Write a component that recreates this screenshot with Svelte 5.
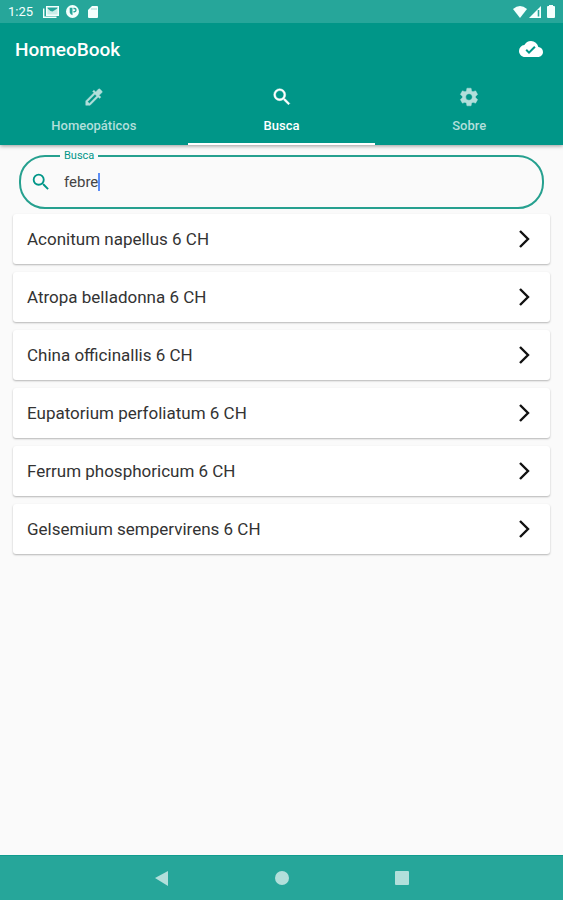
<script>
  let query = $state('febre');
  let active = $state('Busca');

  const tabs = [
    {
      name: 'Homeopáticos',
      path: 'M20.71 5.63l-2.34-2.34a1 1 0 0 0-1.41 0l-3.12 3.12-1.93-1.91-1.41 1.41 1.42 1.42L3 16.25V21h4.75l8.92-8.92 1.42 1.42 1.41-1.41-1.92-1.92 3.12-3.12c.4-.4.4-1.03.01-1.42zM6.92 19L5 17.08l8.06-8.06 1.92 1.92L6.92 19z'
    },
    {
      name: 'Busca',
      path: 'M15.5 14h-.79l-.28-.27A6.47 6.47 0 0 0 16 9.5 6.5 6.5 0 1 0 9.5 16c1.61 0 3.09-.59 4.23-1.57l.27.28v.79l5 4.99L20.49 19l-4.99-5zm-6 0C7.01 14 5 11.99 5 9.5S7.01 5 9.5 5 14 7.01 14 9.5 11.99 14 9.5 14z'
    },
    {
      name: 'Sobre',
      path: 'M19.14 12.94c.04-.3.06-.61.06-.94 0-.32-.02-.64-.07-.94l2.03-1.58a.49.49 0 0 0 .12-.61l-1.92-3.32a.49.49 0 0 0-.59-.22l-2.39.96c-.5-.38-1.03-.7-1.62-.94l-.36-2.54a.48.48 0 0 0-.48-.41h-3.84a.47.47 0 0 0-.47.41l-.36 2.54c-.59.24-1.13.57-1.62.94l-2.39-.96a.48.48 0 0 0-.59.22L2.74 8.87a.47.47 0 0 0 .12.61l2.03 1.58c-.05.3-.09.63-.09.94s.02.64.07.94l-2.03 1.58a.49.49 0 0 0-.12.61l1.92 3.32c.12.22.37.29.59.22l2.39-.96c.5.38 1.03.7 1.62.94l.36 2.54c.05.24.24.41.48.41h3.84c.24 0 .44-.17.47-.41l.36-2.54c.59-.24 1.13-.56 1.62-.94l2.39.96c.22.08.47 0 .59-.22l1.92-3.32a.47.47 0 0 0-.12-.61l-2.01-1.58zM12 15.6A3.61 3.61 0 0 1 8.4 12c0-1.98 1.62-3.6 3.6-3.6s3.6 1.62 3.6 3.6-1.62 3.6-3.6 3.6z'
    }
  ];

  const remedies = [
    'Aconitum napellus 6 CH',
    'Atropa belladonna 6 CH',
    'China officinallis 6 CH',
    'Eupatorium perfoliatum 6 CH',
    'Ferrum phosphoricum 6 CH',
    'Gelsemium sempervirens 6 CH'
  ];
</script>

<div class="screen">
  <header>
    <div class="status">
      <span class="time">1:25</span>
      <div class="notices">
        <svg width="16" height="12" viewBox="0 0 16 12" aria-hidden="true">
          <path d="M3.700.700h11.600v8.600H3.700z" fill="none" stroke="currentColor" stroke-width="1.400" />
          <path d="M.7 2.500v8.800h12.800" fill="none" stroke="currentColor" stroke-width="1.400" />
          <path d="M4 9V2l3.500 3 2 .5L12 4l3-2v7z" fill="currentColor" opacity=".8" />
        </svg>
        <svg width="13" height="13" viewBox="0 0 14 14" aria-hidden="true">
          <path d="M7 0a7 7 0 1 0 0 14A7 7 0 0 0 7 0zM4 3h3v8a4 4 0 0 1-3-3zM8 3h1a2.500 2.500 0 0 1 0 5H8V6.500h1a1 1 0 0 0 0-2H8z" fill="currentColor" fill-rule="evenodd" />
        </svg>
        <svg width="10" height="12" viewBox="0 0 10 12" aria-hidden="true">
          <path d="M4 0h5a1 1 0 0 1 1 1v10a1 1 0 0 1-1 1H1a1 1 0 0 1-1-1V4z" fill="currentColor" />
          <path d="M4 2v2M6 2v2M8 2v2" stroke="#26a69a" stroke-width=".8" opacity=".5" />
        </svg>
      </div>
      <div class="signals">
        <svg width="14" height="12" viewBox="0 0 14 12" aria-hidden="true">
          <path d="M0 3Q7-3 14 3L7 12z" fill="currentColor" />
        </svg>
        <svg width="12" height="12" viewBox="0 0 12 12" aria-hidden="true">
          <path d="M12 0v12H0z" fill="currentColor" />
          <path d="M9.500 4v6.500" stroke="#26a69a" stroke-width="1.600" />
        </svg>
        <svg class="battery" width="8" height="13" viewBox="0 0 8 13" aria-hidden="true">
          <path d="M2 0h4v1h1a1 1 0 0 1 1 1v10a1 1 0 0 1-1 1H1a1 1 0 0 1-1-1V2a1 1 0 0 1 1-1h1z" fill="currentColor" />
        </svg>
      </div>
    </div>

    <div class="bar">
      <h1>HomeoBook</h1>
      <button class="sync" aria-label="Sincronizado">
        <svg width="24" height="24" viewBox="0 0 24 24" aria-hidden="true">
          <path fill="currentColor" d="M19.350 10.040A7.490 7.490 0 0 0 12 4C9.110 4 6.600 5.640 5.350 8.040A5.994 5.994 0 0 0 0 14c0 3.310 2.690 6 6 6h13c2.760 0 5-2.240 5-5 0-2.640-2.050-4.780-4.650-4.960zM10 17l-3.500-3.500 1.410-1.410L10 14.170l5.180-5.180 1.410 1.410L10 17z" />
        </svg>
      </button>
    </div>

    <nav class="tabs">
      {#each tabs as tab}
        <button class="tab" class:active={active === tab.name} onclick={() => (active = tab.name)}>
          <svg width="22" height="22" viewBox="0 0 24 24" aria-hidden="true"><path d={tab.path} fill="currentColor" stroke="currentColor" stroke-width=".5" /></svg>
          <span>{tab.name}</span>
        </button>
      {/each}
    </nav>
  </header>

  <main>
    <fieldset class="search">
      <legend><label for="query">Busca</label></legend>
      <svg width="22" height="22" viewBox="0 0 24 24" aria-hidden="true"><path d={tabs[1].path} fill="currentColor" /></svg>
      <input id="query" type="text" bind:value={query} autocomplete="off" spellcheck="false" />
      <span class="caret"></span>
    </fieldset>

    <ul>
      {#each remedies as remedy}
        <li>
          <a href="#remedy">
            <span>{remedy}</span>
            <svg width="12" height="20" viewBox="0 0 12 20" aria-hidden="true">
              <path d="M2 2l8 8-8 8" fill="none" stroke="currentColor" stroke-width="2.400" />
            </svg>
          </a>
        </li>
      {/each}
    </ul>
  </main>

  <footer>
    <button aria-label="Voltar"><svg width="16" height="16" viewBox="0 0 16 16"><path d="M1 8L14 1v15z" fill="currentColor" /></svg></button>
    <button aria-label="Início"><svg width="16" height="16" viewBox="0 0 16 16"><circle cx="8" cy="8" r="7" fill="currentColor" /></svg></button>
    <button aria-label="Recentes"><svg width="16" height="16" viewBox="0 0 16 16"><rect x="1" y="1" width="14" height="14" rx="1" fill="currentColor" /></svg></button>
  </footer>
</div>

<style>
  .screen {
    display: flex;
    flex-direction: column;
    min-height: 100vh;
    background: #fafafa;
    color: #333;
    font-family: Roboto, 'Liberation Sans', sans-serif;
  }
  svg { display: block; flex: none; }
  button {
    margin: 0;
    padding: 0;
    border: 0;
    background: none;
    color: inherit;
    font: inherit;
    cursor: pointer;
  }
  header {
    background: #009688;
    color: #fff;
    box-shadow: 0 1px 4px rgba(0, 0, 0, 0.4);
  }
  .status {
    display: flex;
    align-items: center;
    gap: 10px;
    height: 23px;
    padding: 0 8px;
    background: #26a69a;
    color: #f4fffd;
  }
  .time { font-size: 13px; }
  .notices {
    display: flex;
    align-items: center;
    gap: 7px;
  }
  .notices svg:last-child { margin-left: 2px; }
  .signals {
    display: flex;
    align-items: center;
    gap: 2px;
    margin-left: auto;
  }
  .battery { margin-left: 4px; }
  .bar {
    display: flex;
    align-items: center;
    justify-content: space-between;
    height: 52px;
    padding: 0 20px 0 15px;
  }
  h1 {
    margin: 0;
    font-size: 19px;
    font-weight: 500;
  }
  .tabs { display: flex; }
  .tab {
    display: flex;
    flex: 1;
    flex-direction: column;
    align-items: center;
    gap: 10px;
    height: 70px;
    padding-top: 11px;
    box-sizing: border-box;
    border-bottom: 2px solid transparent;
    color: #b2dfdb;
    font-size: 13px;
    font-weight: 500;
    line-height: 16px;
  }
  .tab.active {
    border-bottom-color: #fff;
    color: #fff;
  }
  main {
    flex: 1;
    padding: 4px 13px 0;
  }
  .search {
    display: flex;
    align-items: center;
    height: 60px;
    box-sizing: border-box;
    min-width: 0;
    margin: 0 6px;
    padding: 0 9px 7px;
    border: 2px solid #26a08f;
    border-radius: 26px;
    color: #009688;
  }
  legend {
    margin-left: 30px;
    padding: 0 4px;
    font-size: 11px;
    line-height: 14px;
  }
  input {
    field-sizing: content;
    min-width: 1px;
    max-width: 90%;
    margin: 0 0 0 12px;
    padding: 0;
    border: 0;
    outline: 0;
    background: none;
    color: #444;
    font-family: inherit;
    font-size: 15px;
    line-height: 20px;
  }
  .caret {
    width: 2px;
    height: 18px;
    background: #5c8df6;
  }
  ul {
    display: flex;
    flex-direction: column;
    gap: 8px;
    margin: 5px 0 16px;
    padding: 0;
    list-style: none;
  }
  a {
    display: flex;
    align-items: center;
    justify-content: space-between;
    height: 50px;
    padding: 0 20px 0 14px;
    border-radius: 3px;
    background: #fff;
    box-shadow: 0 1px 2px rgba(0, 0, 0, 0.28);
    color: inherit;
    font-size: 17px;
    text-decoration: none;
  }
  a svg { color: #111; }
  footer {
    display: flex;
    align-items: center;
    justify-content: center;
    gap: 104px;
    height: 44px;
    border-top: 1px solid #109c8e;
    background: #26a69a;
    color: #b2dfdb;
  }
</style>
